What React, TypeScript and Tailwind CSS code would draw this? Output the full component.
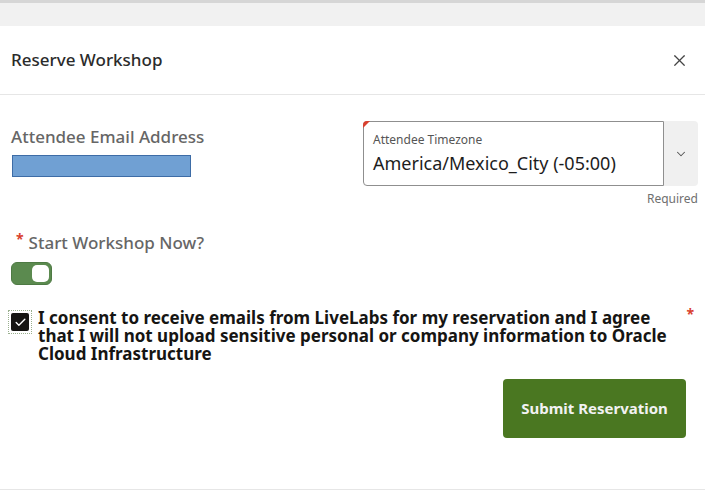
import { X, ChevronDown, Check } from "lucide-react";

const font = { fontFamily: '"Noto Sans", "Open Sans", sans-serif' };

function Toggle() {
    return (
        <div className="w-[41px] h-[23px] rounded-[6px] bg-[#5b8a4f] border border-[#4e7a44] flex items-center justify-end pr-[2px]">
            <div className="w-[17px] h-[17px] rounded-[5px] bg-white" />
        </div>
    );
}

function Checkbox() {
    return (
        <div className="relative w-[18px] h-[18px] mt-[4px] shrink-0">
            <div className="absolute -inset-[3px] border border-dotted border-[#9ab08e]" />
            <div className="absolute inset-0 bg-[#161513] rounded-[2px] flex items-center justify-center">
                <Check className="size-[13px] text-white" strokeWidth={2.5} />
            </div>
        </div>
    );
}

export default function App() {
    return (
        <div style={font} className="w-[705px] h-[491px] bg-white flex flex-col overflow-hidden">
            <div className="h-[26px] shrink-0 bg-[#f1f1f1] border-t-[3px] border-[#d6d6d6]" />
            <div className="h-[69px] shrink-0 flex items-center justify-between pl-[11px] pr-[16px] border-b border-[#e6e6e6]">
                <h1 className="text-[17px] font-medium text-[#2b2b2b]">Reserve Workshop</h1>
                <X className="size-[19px] text-[#444]" strokeWidth={1.5} />
            </div>

            <div className="flex-1 flex flex-col px-[11px] pt-[26px] border-b border-[#e6e6e6]">
                <div className="flex justify-between">
                    <div className="flex flex-col pt-[6px]">
                        <span className="text-[17px] font-medium text-[#666] leading-[20px]">
                            Attendee Email Address
                        </span>
                        <div className="mt-[8px] ml-[1px] w-[179px] h-[22px] bg-[#70a0d3] border border-[#3d6ca6]" />
                    </div>
                    <div className="flex flex-col items-end -mr-[4px]">
                        <div className="flex">
                            <div className="relative w-[301px] h-[65px] border border-[#8f8f8f] rounded-l-[4px] px-[9px] pt-[11px] bg-white">
                                <div className="absolute -top-px -left-px w-0 h-0 border-t-[7px] border-r-[7px] border-t-[#d9412f] border-r-transparent rounded-tl-[4px]" />
                                <div className="text-[12px] text-[#555] leading-[14px]">Attendee Timezone</div>
                                <div className="text-[18px] text-[#1d1d1d] leading-[24px] mt-[4px]">
                                    America/Mexico_City (-05:00)
                                </div>
                            </div>
                            <div className="w-[34px] h-[65px] bg-[#f0f0f0] rounded-r-[4px] flex items-center justify-center">
                                <ChevronDown className="size-[14px] text-[#555]" strokeWidth={1.8} />
                            </div>
                        </div>
                        <span className="text-[12px] text-[#6f6f6f] mt-[5px] leading-[16px]">Required</span>
                    </div>
                </div>

                <div className="mt-[25px] flex items-start">
                    <span className="text-[#d9412f] text-[14px] leading-[14px] ml-[5px] mr-[5px] font-bold">*</span>
                    <span className="text-[17px] font-medium text-[#666] leading-[22px]">Start Workshop Now?</span>
                </div>
                <div className="mt-[8px]">
                    <Toggle />
                </div>

                <div className="mt-[24px] flex items-start">
                    <Checkbox />
                    <p className="ml-[9px] text-[17px] font-bold text-[#161513] leading-[18px] whitespace-nowrap">
                        I consent to receive emails from LiveLabs for my reservation and I agree
                        <br />
                        that I will not upload sensitive personal or company information to Oracle
                        <br />
                        Cloud Infrastructure
                    </p>
                    <span className="ml-auto -mt-[2px] text-[#d9412f] text-[14px] leading-[14px] font-bold">*</span>
                </div>

                <div className="flex justify-end mt-[16px] pr-[8px]">
                    <button className="w-[183px] h-[59px] rounded-[4px] bg-[#4a7721] text-[#f2f2f2] text-[15px] font-bold">
                        Submit Reservation
                    </button>
                </div>
            </div>
            <div className="h-[1px]" />
        </div>
    );
}
